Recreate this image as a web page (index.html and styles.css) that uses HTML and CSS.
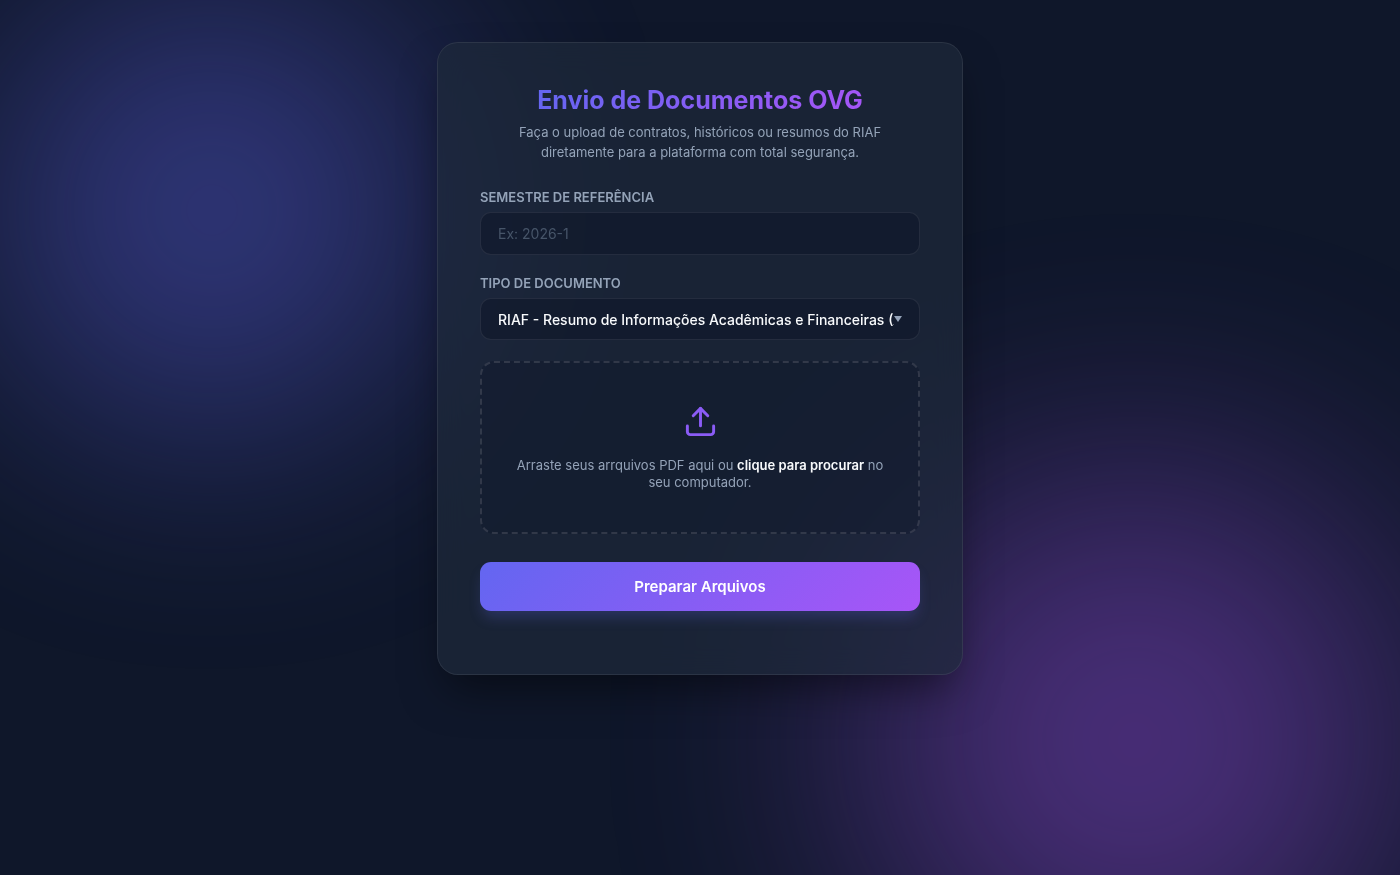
FILE: index.html
```html
<!DOCTYPE html>
<html lang="pt-BR">
<head>
<meta charset="utf-8">
<meta name="viewport" content="width=device-width, initial-scale=1">
<title>Envio de Documentos OVG</title>
<link rel="stylesheet" href="styles.css">
</head>
<body>
<div class="backdrop" aria-hidden="true">
  <div class="glow glow-indigo"></div>
  <div class="glow glow-purple"></div>
</div>
<main class="card">
  <header class="card-header">
    <h1 class="title">Envio de Documentos OVG</h1>
    <p class="subtitle">Faça o upload de contratos, históricos ou resumos do RIAF diretamente para a plataforma com total segurança.</p>
  </header>
  <form class="form">
    <div class="field">
      <label class="label" for="semestre">Semestre de Referência</label>
      <input class="control" id="semestre" type="text" placeholder="Ex: 2026-1">
    </div>
    <div class="field">
      <label class="label" for="tipo">Tipo de Documento</label>
      <div class="select-wrap">
        <select class="control select" id="tipo">
          <option>RIAF - Resumo de Informações Acadêmicas e Financeiras (Arquivo Único)</option>
          <option>Contrato</option>
          <option>Histórico</option>
        </select>
      </div>
    </div>
    <label class="dropzone" for="arquivos">
      <svg class="upload-icon" viewBox="0 0 24 24" fill="none" stroke="currentColor" stroke-width="2" stroke-linecap="round" stroke-linejoin="round" aria-hidden="true">
        <path d="M21 15v4a2 2 0 0 1-2 2H5a2 2 0 0 1-2-2v-4"/>
        <path d="M17 8l-5-5-5 5"/>
        <path d="M12 3v12"/>
      </svg>
      <span class="dropzone-text">Arraste seus arrquivos PDF aqui ou <strong>clique para procurar</strong> no seu computador.</span>
      <input class="file-input" id="arquivos" type="file" accept="application/pdf" multiple>
    </label>
    <button class="submit" type="button">Preparar Arquivos</button>
  </form>
</main>
</body>
</html>
```
FILE: styles.css
```css
:root {
  --bg: #0f172a;
  --indigo: #6366f1;
  --purple: #a855f7;
  --muted: #94a3b8;
  --line: rgba(255, 255, 255, 0.08);
}

* {
  box-sizing: border-box;
}

body {
  margin: 0;
  min-height: 100vh;
  padding: 42px 16px;
  background: var(--bg);
  color: #f8fafc;
  font-family: Inter, "Liberation Sans", sans-serif;
  font-size: 14px;
}

.backdrop {
  position: fixed;
  inset: 0;
  overflow: hidden;
  z-index: -1;
}

.glow {
  position: absolute;
  border-radius: 50%;
  opacity: 0.4;
}

.glow-indigo {
  top: -20px;
  left: -18px;
  width: 460px;
  height: 460px;
  background: var(--indigo);
  filter: blur(118px);
}

.glow-purple {
  right: -5px;
  bottom: -135px;
  width: 540px;
  height: 540px;
  background: var(--purple);
  filter: blur(132px);
}

.card {
  max-width: 526px;
  margin: 0 auto;
  padding: 42px 42px 63px;
  border: 1px solid var(--line);
  border-radius: 21px;
  background: rgba(30, 41, 59, 0.7);
  backdrop-filter: blur(14px);
  box-shadow: 0 22px 44px -10px rgba(0, 0, 0, 0.5);
}

.card-header {
  margin-bottom: 28px;
  padding: 0 14px;
  text-align: center;
}

.title {
  width: fit-content;
  margin: 0 auto 6px;
  background: linear-gradient(135deg, var(--indigo), var(--purple));
  background-clip: text;
  color: transparent;
  font-size: 25px;
  font-weight: 700;
  line-height: 31px;
}

.subtitle {
  margin: 0;
  color: var(--muted);
  font-size: 13px;
  line-height: 20px;
}

.form {
  display: flex;
  flex-direction: column;
}

.field {
  display: flex;
  flex-direction: column;
  gap: 7px;
  margin-bottom: 21px;
}

.label {
  color: var(--muted);
  font-size: 13px;
  font-weight: 600;
  line-height: 15px;
  text-transform: uppercase;
}

.control {
  width: 100%;
  height: 43px;
  padding: 0 17px;
  border: 1px solid var(--line);
  border-radius: 11px;
  outline: none;
  background: rgba(15, 23, 42, 0.6);
  color: #f8fafc;
  font: 400 14px/17px Inter, "Liberation Sans", sans-serif;
}

.control::placeholder {
  color: #475569;
  opacity: 1;
}

.select-wrap {
  position: relative;
}

.select {
  display: block;
  height: 42px;
  padding-right: 25px;
  appearance: none;
  font-weight: 500;
}

.select-wrap::after {
  content: "";
  position: absolute;
  top: 18px;
  right: 18px;
  border: solid transparent;
  border-width: 6px 4px 0;
  border-top-color: var(--muted);
  pointer-events: none;
}

.dropzone {
  display: flex;
  flex-direction: column;
  align-items: center;
  gap: 18px;
  margin-bottom: 28px;
  padding: 41px 28px;
  border: 2px dashed rgba(255, 255, 255, 0.12);
  border-radius: 14px;
  background: rgba(15, 23, 42, 0.4);
  color: var(--muted);
  cursor: pointer;
}

.upload-icon {
  width: 35px;
  height: 35px;
  color: #8b5cf6;
}

.dropzone-text {
  font-size: 13px;
  line-height: 17px;
  text-align: center;
}

.dropzone-text strong {
  color: #f8fafc;
  font-weight: 600;
}

.file-input {
  display: none;
}

.submit {
  padding: 15px;
  border: 0;
  border-radius: 11px;
  background: linear-gradient(135deg, var(--indigo), var(--purple));
  box-shadow: 0 9px 14px -3px rgba(99, 102, 241, 0.25);
  color: #fff;
  font: 600 15px/19px Inter, "Liberation Sans", sans-serif;
  cursor: pointer;
}
```
